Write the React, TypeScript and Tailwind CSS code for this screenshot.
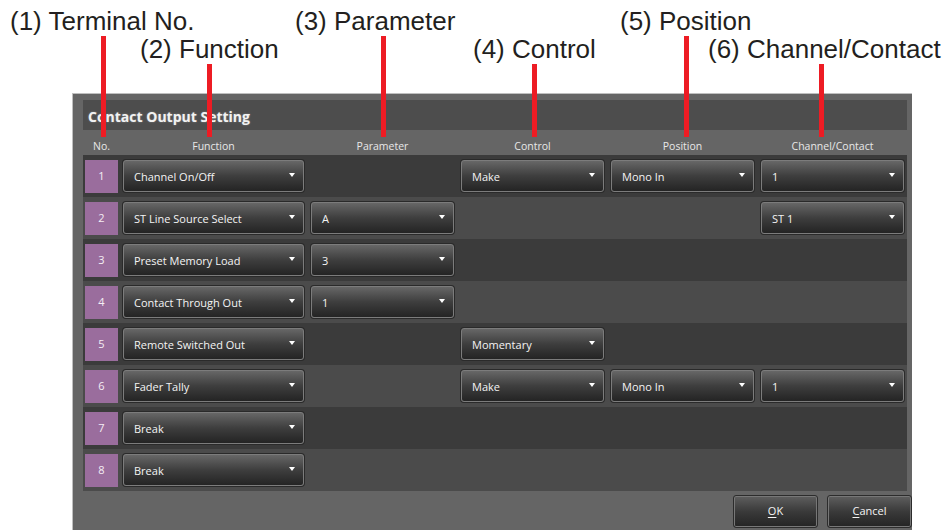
import React from 'react'

const ui = { fontFamily: '"Open Sans", "Noto Sans", sans-serif' }
const label = { fontFamily: '"Liberation Sans", Arial, sans-serif' }

type Row = {
  no: number
  fn: string
  param?: string
  control?: string
  position?: string
  channel?: string
}

const rows: Row[] = [
  { no: 1, fn: 'Channel On/Off', control: 'Make', position: 'Mono In', channel: '1' },
  { no: 2, fn: 'ST Line Source Select', param: 'A', channel: 'ST 1' },
  { no: 3, fn: 'Preset Memory Load', param: '3' },
  { no: 4, fn: 'Contact Through Out', param: '1' },
  { no: 5, fn: 'Remote Switched Out', control: 'Momentary' },
  { no: 6, fn: 'Fader Tally', control: 'Make', position: 'Mono In', channel: '1' },
  { no: 7, fn: 'Break' },
  { no: 8, fn: 'Break' },
]

// callout labels laid over the screenshot
const callouts = [
  { text: '(1) Terminal No.', x: 'left-[10px] top-[8px]' },
  { text: '(3) Parameter', x: 'left-[295px] top-[8px]' },
  { text: '(5) Position', x: 'left-[620px] top-[8px]' },
  { text: '(2) Function', x: 'left-[140px] top-[36px]' },
  { text: '(4) Control', x: 'left-[473px] top-[36px]' },
  { text: '(6) Channel/Contact', x: 'left-[708px] top-[36px]' },
]

const lines = [
  'left-[101px] top-[36px] h-[101px]',
  'left-[207px] top-[64px] h-[73px]',
  'left-[381px] top-[36px] h-[101px]',
  'left-[532px] top-[64px] h-[73px]',
  'left-[684px] top-[36px] h-[101px]',
  'left-[819px] top-[64px] h-[73px]',
]

function Select({ value, wide }: { value: string; wide?: boolean }) {
  return (
    <div
      className={`${wide ? 'w-[181px]' : 'w-[143px]'} h-[32px] shrink-0 rounded-[3px] border border-[#7c7c7c] bg-linear-to-b from-[#676767] via-[#3e3e3e] to-[#242424] shadow-[0_0_0_1px_#2a2a2a] flex items-center justify-between pl-[10px] pr-[8px] text-[11px] text-[#f4f4f4]`}
    >
      <span className="pt-[3px]">{value}</span>
      <span className="w-0 h-0 border-l-[3.5px] border-r-[3.5px] border-t-[4px] border-l-transparent border-r-transparent border-t-white -mt-[3px]" />
    </div>
  )
}

function Empty({ wide }: { wide?: boolean }) {
  return <div className={`${wide ? 'w-[181px]' : 'w-[143px]'} shrink-0`} />
}

function Button({ first, rest }: { first: string; rest: string }) {
  return (
    <button className="w-[85px] h-[33px] rounded-[3px] border border-[#2c2c2c] bg-linear-to-b from-[#5f5f5f] via-[#3a3a3a] to-[#242424] shadow-[inset_0_0_0_1px_#777] text-[11px] text-[#f4f4f4]">
      <span className="underline underline-offset-2">{first}</span>
      {rest}
    </button>
  )
}

export default function App() {
  return (
    <div className="relative w-[951px] h-[530px] overflow-hidden bg-white">
      <div className="pt-[93px] pl-[72px]" style={ui}>
        <div className="w-[840px] h-[437px] border-t border-l border-[#bfbfbf] bg-[#656565] pl-[10px] pt-[6px]">
          <div className="w-[824px] h-[30px] bg-[#4d4d4d] flex items-center pl-[5px] pt-[3px]">
            <span className="text-[14px] font-bold text-[#f2f2f2] [text-shadow:0_0_2px_rgba(255,255,255,0.35)]">
              Contact Output Setting
            </span>
          </div>

          <div className="w-[824px] h-[25px] flex items-end pl-[2px] gap-[7px] text-[10.5px] text-[#e8e8e8]">
            <div className="w-[33px] -mr-[2px] text-center">No.</div>
            <div className="w-[181px] text-center">Function</div>
            <div className="w-[143px] text-center">Parameter</div>
            <div className="w-[143px] text-center">Control</div>
            <div className="w-[143px] text-center">Position</div>
            <div className="w-[143px] text-center">Channel/Contact</div>
          </div>

          <div className="w-[824px]">
            {rows.map((r) => (
              <div
                key={r.no}
                className={`h-[42px] flex items-center pl-[2px] gap-[7px] ${r.no % 2 ? 'bg-[#3b3b3b]' : 'bg-[#4b4b4b]'}`}
              >
                <div className="w-[33px] h-[33px] -mr-[2px] bg-[#9a6d9d] flex items-center justify-center text-[11px] text-[#f4eef4]">
                  {r.no}
                </div>
                <Select value={r.fn} wide />
                {r.param ? <Select value={r.param} /> : <Empty />}
                {r.control ? <Select value={r.control} /> : <Empty />}
                {r.position ? <Select value={r.position} /> : <Empty />}
                {r.channel ? <Select value={r.channel} /> : <Empty />}
              </div>
            ))}
          </div>

          <div className="w-[829px] flex justify-end gap-[9px] mt-[4px]">
            <Button first="O" rest="K" />
            <Button first="C" rest="ancel" />
          </div>
        </div>
      </div>

      {callouts.map((c) => (
        <div
          key={c.text}
          className={`absolute ${c.x} text-[26px] leading-none text-[#231f20] whitespace-nowrap`}
          style={label}
        >
          {c.text}
        </div>
      ))}
      {lines.map((l) => (
        <div key={l} className={`absolute ${l} w-[5px] bg-[#ed1c24]`} />
      ))}
    </div>
  )
}
